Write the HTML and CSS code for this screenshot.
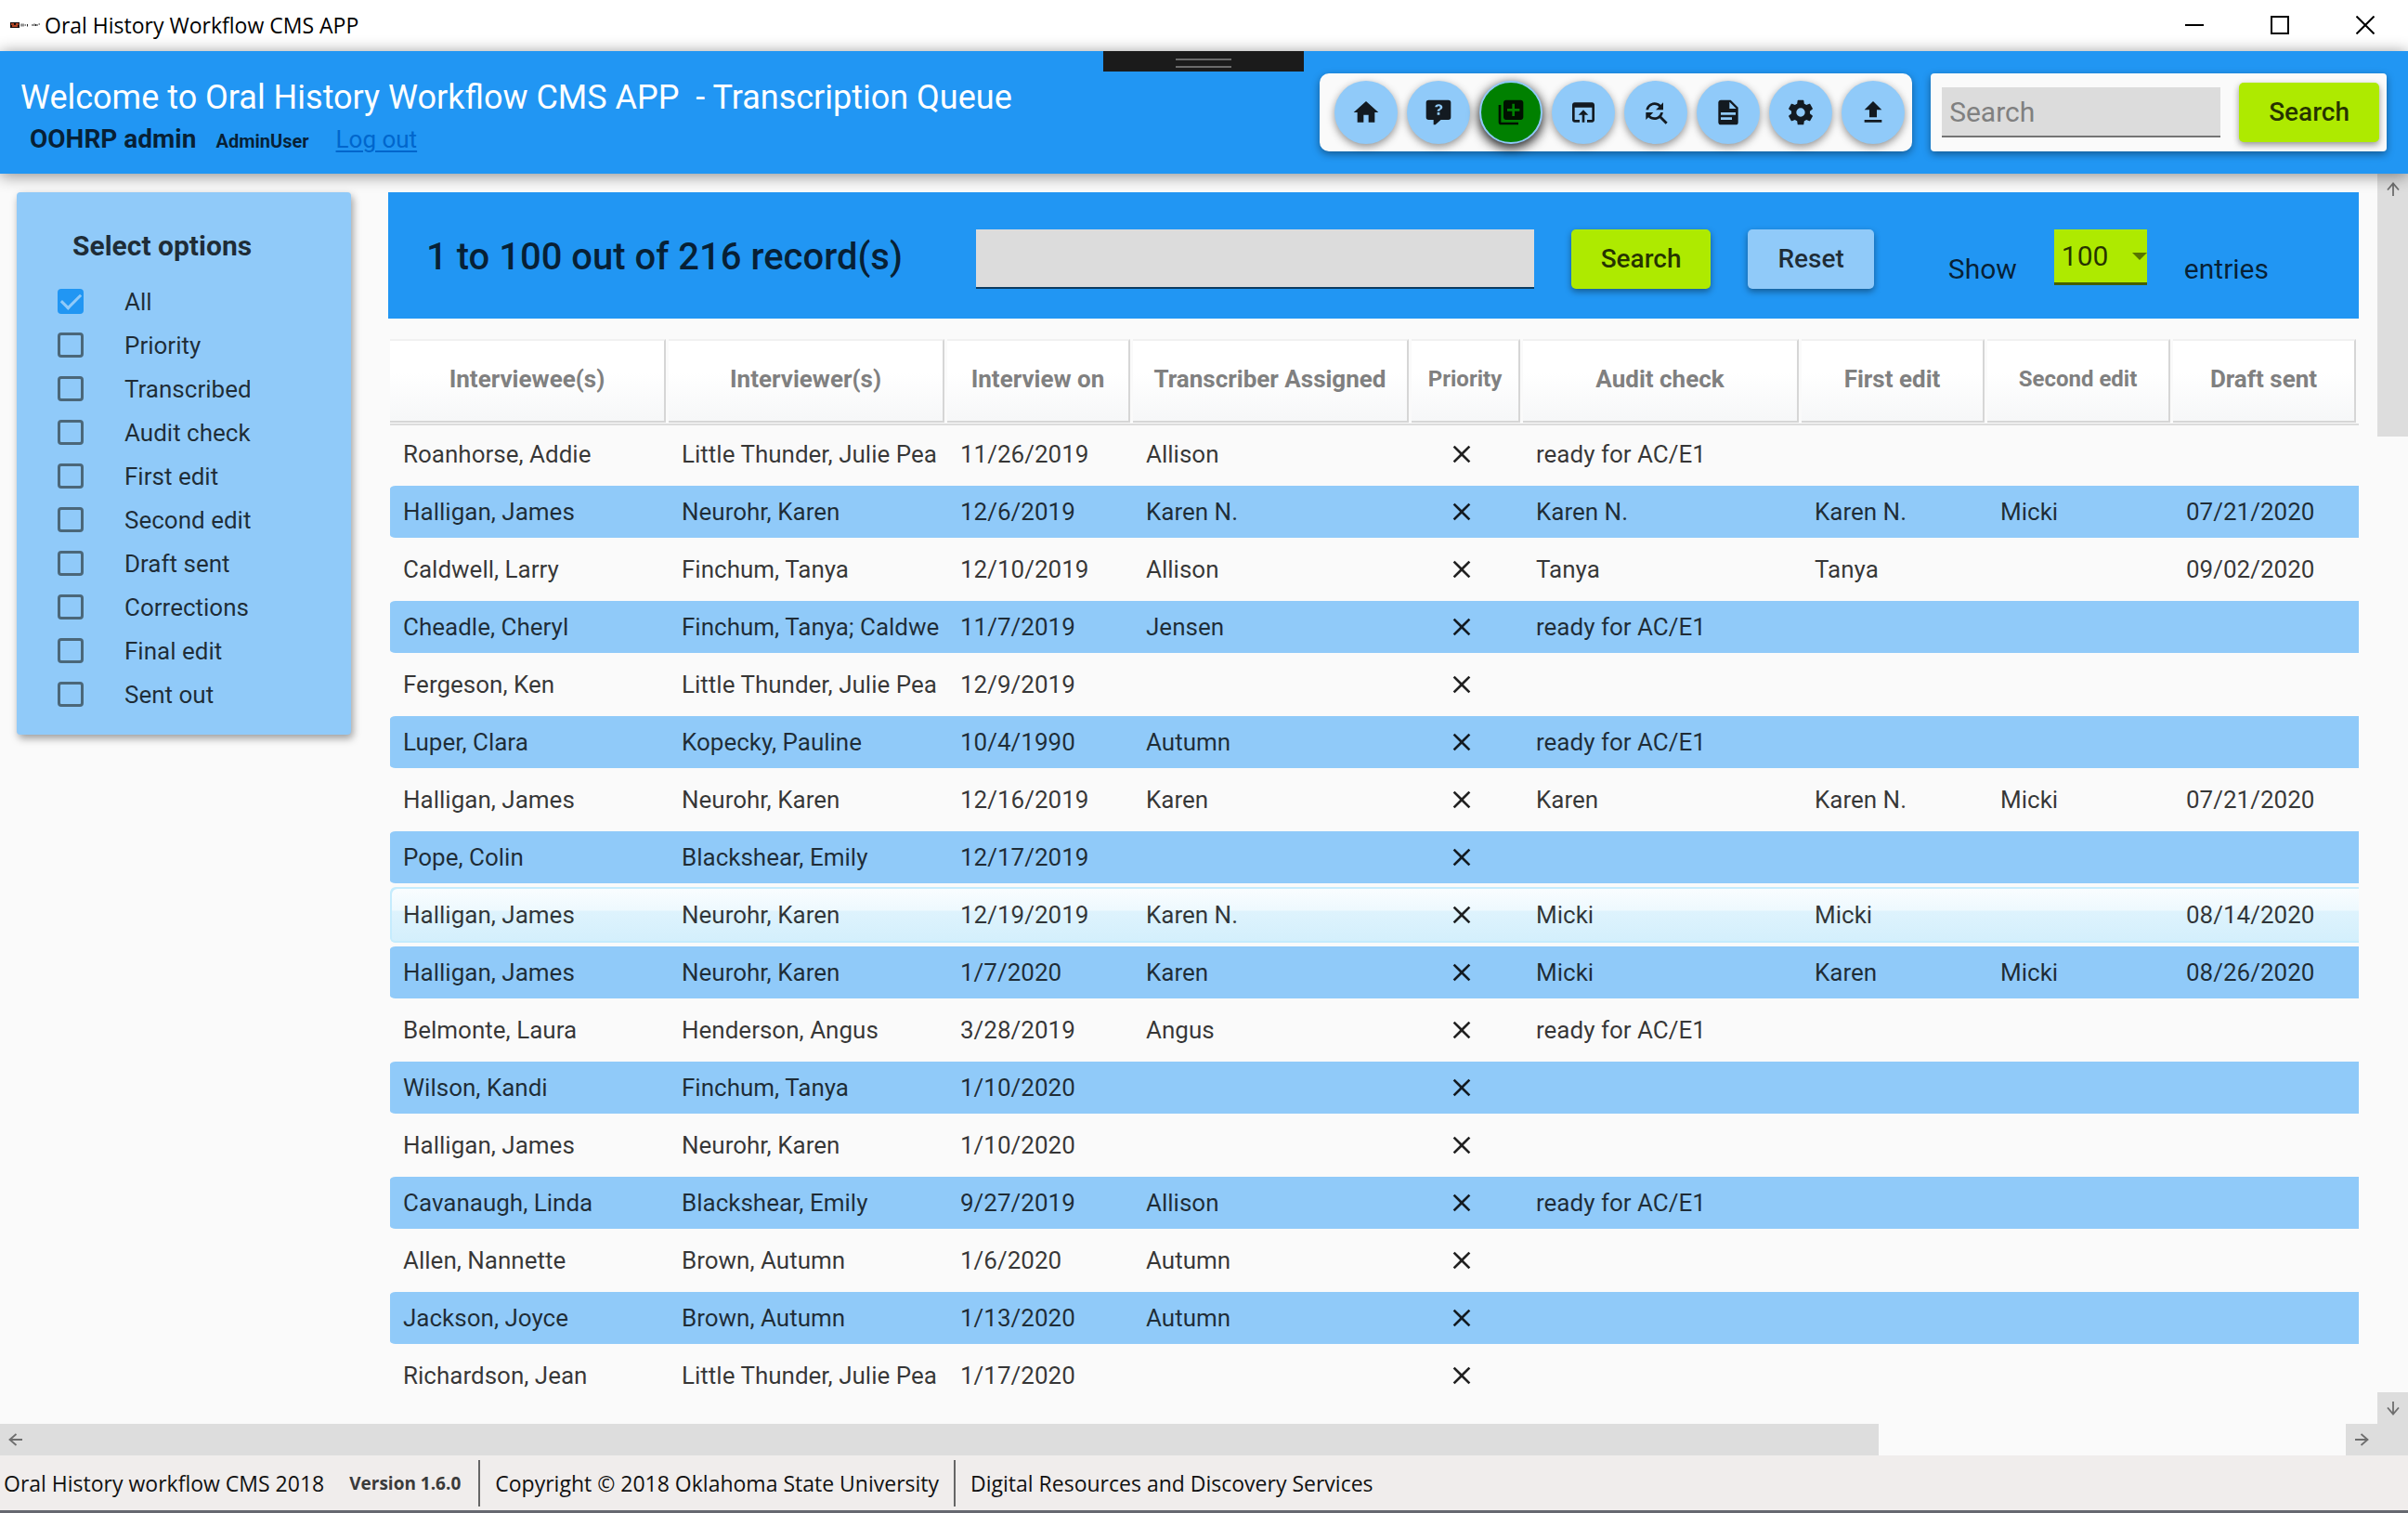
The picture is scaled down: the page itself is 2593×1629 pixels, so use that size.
FILE: index.html
```html
<!DOCTYPE html>
<html lang="en">
<head>
<meta charset="utf-8">
<title>Oral History Workflow CMS APP</title>
<link rel="stylesheet" href="styles.css">
</head>
<body>
<svg class="sprite" aria-hidden="true">
  <symbol id="close" viewBox="0 0 24 24"><path d="M19,6.41L17.59,5L12,10.59L6.41,5L5,6.41L10.59,12L5,17.59L6.41,19L12,13.41L17.59,19L19,17.59L13.41,12L19,6.41Z"/></symbol>
  <symbol id="arrow" viewBox="0 0 16 16"><path d="M8 1.500V15M2 8.500L8 1.500L14 8.500" fill="none" stroke="#6e6e6e" stroke-width="1.800"/></symbol>
</svg>

<div class="titlebar">
  <svg class="app-logo" viewBox="0 0 32 8" aria-hidden="true">
    <path d="M0 1H10V7H0Z" fill="#1c1010"/>
    <path d="M1 3H4M2 5H5M6 3H9M5 5H8" stroke="#e2572b" stroke-width="1.400"/>
    <path d="M12 2.500V5.500M14 2.500V5.500M15.500 4H17M18.500 3V5.500M24 3V5M26 2.500V5M27.500 3V5M29 3V5M30.500 3H32" stroke="#222" stroke-width="1"/>
  </svg>
  <span class="app-name">Oral History Workflow CMS APP</span>
  <div class="window-controls">
    <button type="button" aria-label="Minimize"><svg viewBox="0 0 20 20"><path d="M0 10H20"/></svg></button>
    <button type="button" aria-label="Maximize"><svg viewBox="0 0 20 20"><path d="M1 1H19V19H1Z"/></svg></button>
    <button type="button" aria-label="Close"><svg viewBox="0 0 20 20"><path d="M0.500 0.500L19.500 19.500M19.500 0.500L0.500 19.500"/></svg></button>
  </div>
</div>

<header class="header">
  <div class="drag-tab"></div>
  <div class="welcome">
    <h1>Welcome to Oral History Workflow CMS APP&nbsp; - Transcription Queue</h1>
    <div class="account">
      <strong class="account-name">OOHRP admin</strong>
      <strong class="account-role">AdminUser</strong>
      <a href="#">Log out</a>
    </div>
  </div>
  <nav class="toolbar" aria-label="Main">
    <button type="button" aria-label="Home"><svg viewBox="0 0 24 24"><path d="M10,20V14H14V20H19V12H22L12,3L2,12H5V20H10Z"/></svg></button>
    <button type="button" aria-label="Help"><svg viewBox="0 0 24 24"><path fill-rule="evenodd" d="M4,2A2,2 0 0,0 2,4V16A2,2 0 0,0 4,18H8V22H9.500L13.900,18H20A2,2 0 0,0 22,16V4A2,2 0 0,0 20,2H4M12.190,5.500C11.300,5.500 10.590,5.680 10.050,6.040C9.500,6.400 9.220,7 9.270,7.690H11.240C11.240,7.410 11.340,7.200 11.500,7.060C11.700,6.920 11.920,6.850 12.190,6.850C12.500,6.850 12.770,6.930 12.950,7.110C13.130,7.280 13.220,7.500 13.220,7.800C13.220,8.080 13.140,8.330 13,8.540C12.830,8.760 12.620,8.940 12.360,9.080C11.840,9.400 11.500,9.680 11.290,9.920C11.100,10.160 11,10.500 11,11H13C13,10.720 13.050,10.500 13.140,10.320C13.230,10.150 13.400,10 13.660,9.850C14.120,9.640 14.500,9.360 14.790,9C15.080,8.630 15.230,8.240 15.230,7.800C15.230,7.100 14.960,6.540 14.420,6.120C13.880,5.710 13.130,5.500 12.190,5.500M11,12V14H13V12H11Z"/></svg></button>
    <button type="button" class="active" aria-label="Transcription queue"><svg viewBox="0 0 24 24"><path d="M4 6H2v14c0 1.100.9 2 2 2h14v-2H4V6zm16-4H8c-1.100 0-2 .9-2 2v12c0 1.100.9 2 2 2h12c1.100 0 2-.9 2-2V4c0-1.100-.9-2-2-2zm-1 9h-4v4h-2v-4H9V9h4V5h2v4h4v2z"/></svg></button>
    <button type="button" aria-label="Open"><svg viewBox="0 0 24 24"><path d="M19 4H5c-1.110 0-2 .9-2 2v12c0 1.100.89 2 2 2h4v-2H5V8h14v10h-4v2h4c1.100 0 2-.9 2-2V6c0-1.100-.89-2-2-2zm-7 6l-4 4h3v6h2v-6h3l-4-4z"/></svg></button>
    <button type="button" aria-label="Find and replace"><svg viewBox="0 0 24 24"><path d="M11 6c1.380 0 2.630.56 3.540 1.460L12 10h6V4l-2.050 2.050C14.680 4.780 12.930 4 11 4c-3.530 0-6.430 2.610-6.920 6H6.100c.46-2.280 2.480-4 4.900-4zm5.640 9.140c.66-.9 1.120-1.970 1.280-3.140H15.900c-.46 2.280-2.480 4-4.900 4-1.380 0-2.630-.56-3.540-1.460L10 12H4v6l2.050-2.050C7.320 17.220 9.070 18 11 18c1.550 0 2.980-.51 4.140-1.360L20 21.490 21.490 20l-4.850-4.860z"/></svg></button>
    <button type="button" aria-label="Documents"><svg viewBox="0 0 24 24"><path d="M13,9H18.500L13,3.500V9M6,2H14L20,8V20A2,2 0 0,1 18,22H6C4.890,22 4,21.100 4,20V4C4,2.890 4.890,2 6,2M15,18V16H6V18H15M18,14V12H6V14H18Z"/></svg></button>
    <button type="button" aria-label="Settings"><svg viewBox="0 0 24 24"><path d="M12,15.500A3.500,3.500 0 0,1 8.500,12A3.500,3.500 0 0,1 12,8.500A3.500,3.500 0 0,1 15.500,12A3.500,3.500 0 0,1 12,15.500M19.430,12.970C19.470,12.650 19.500,12.330 19.500,12C19.500,11.670 19.470,11.340 19.430,11L21.540,9.370C21.730,9.220 21.780,8.950 21.660,8.730L19.660,5.270C19.540,5.050 19.270,4.960 19.050,5.050L16.560,6.050C16.040,5.660 15.500,5.320 14.870,5.070L14.500,2.420C14.460,2.180 14.250,2 14,2H10C9.750,2 9.540,2.180 9.500,2.420L9.130,5.070C8.500,5.320 7.960,5.660 7.440,6.050L4.950,5.050C4.730,4.960 4.460,5.050 4.340,5.270L2.340,8.730C2.210,8.950 2.270,9.220 2.460,9.370L4.570,11C4.530,11.340 4.500,11.670 4.500,12C4.500,12.330 4.530,12.650 4.570,12.970L2.460,14.630C2.270,14.780 2.210,15.050 2.340,15.270L4.340,18.730C4.460,18.950 4.730,19.030 4.950,18.950L7.440,17.940C7.960,18.340 8.500,18.680 9.130,18.930L9.500,21.580C9.540,21.820 9.750,22 10,22H14C14.250,22 14.460,21.820 14.500,21.580L14.870,18.930C15.500,18.670 16.040,18.340 16.560,17.940L19.050,18.950C19.270,19.030 19.540,18.950 19.660,18.730L21.660,15.270C21.780,15.050 21.730,14.780 21.540,14.630L19.430,12.970Z"/></svg></button>
    <button type="button" aria-label="Upload"><svg viewBox="0 0 24 24"><path d="M9,16V10H5L12,3L19,10H15V16H9M5,20V18H19V20H5Z"/></svg></button>
  </nav>
  <form class="quick-search">
    <input type="text" placeholder="Search" aria-label="Search">
    <button type="button" class="btn btn-lime">Search</button>
  </form>
</header>

<div class="workspace">
  <div class="content">
    <aside class="filters">
      <h2>Select options</h2>
      <ul>
        <li><label><input type="checkbox" checked>All</label></li>
        <li><label><input type="checkbox">Priority</label></li>
        <li><label><input type="checkbox">Transcribed</label></li>
        <li><label><input type="checkbox">Audit check</label></li>
        <li><label><input type="checkbox">First edit</label></li>
        <li><label><input type="checkbox">Second edit</label></li>
        <li><label><input type="checkbox">Draft sent</label></li>
        <li><label><input type="checkbox">Corrections</label></li>
        <li><label><input type="checkbox">Final edit</label></li>
        <li><label><input type="checkbox">Sent out</label></li>
      </ul>
    </aside>

    <main>
      <form class="banner">
        <p class="count">1 to 100 out of 216 record(s)</p>
        <input type="text" aria-label="Search records">
        <button type="button" class="btn btn-lime">Search</button>
        <button type="button" class="btn btn-blue">Reset</button>
        <label class="banner-text show" for="page-size">Show</label>
        <span class="page-size"><select id="page-size"><option>100</option></select></span>
        <span class="banner-text">entries</span>
      </form>

      <table>
        <colgroup>
          <col class="wide"><col class="wide"><col class="mid"><col class="wide"><col class="narrow"><col class="wide"><col class="mid"><col class="mid"><col class="mid">
        </colgroup>
        <thead>
          <tr>
            <th><div>Interviewee(s)</div></th>
            <th><div>Interviewer(s)</div></th>
            <th><div>Interview on</div></th>
            <th><div>Transcriber Assigned</div></th>
            <th><div class="small">Priority</div></th>
            <th><div>Audit check</div></th>
            <th><div>First edit</div></th>
            <th><div class="small">Second edit</div></th>
            <th><div>Draft sent</div></th>
          </tr>
        </thead>
        <tbody>
          <tr><td>Roanhorse, Addie</td><td>Little Thunder, Julie Pea</td><td>11/26/2019</td><td>Allison</td><td class="flag"><svg><use href="#close"/></svg></td><td>ready for AC/E1</td><td></td><td></td><td></td></tr>
          <tr><td>Halligan, James</td><td>Neurohr, Karen</td><td>12/6/2019</td><td>Karen N.</td><td class="flag"><svg><use href="#close"/></svg></td><td>Karen N.</td><td>Karen N.</td><td>Micki</td><td>07/21/2020</td></tr>
          <tr><td>Caldwell, Larry</td><td>Finchum, Tanya</td><td>12/10/2019</td><td>Allison</td><td class="flag"><svg><use href="#close"/></svg></td><td>Tanya</td><td>Tanya</td><td></td><td>09/02/2020</td></tr>
          <tr><td>Cheadle, Cheryl</td><td>Finchum, Tanya; Caldwe</td><td>11/7/2019</td><td>Jensen</td><td class="flag"><svg><use href="#close"/></svg></td><td>ready for AC/E1</td><td></td><td></td><td></td></tr>
          <tr><td>Fergeson, Ken</td><td>Little Thunder, Julie Pea</td><td>12/9/2019</td><td></td><td class="flag"><svg><use href="#close"/></svg></td><td></td><td></td><td></td><td></td></tr>
          <tr><td>Luper, Clara</td><td>Kopecky, Pauline</td><td>10/4/1990</td><td>Autumn</td><td class="flag"><svg><use href="#close"/></svg></td><td>ready for AC/E1</td><td></td><td></td><td></td></tr>
          <tr><td>Halligan, James</td><td>Neurohr, Karen</td><td>12/16/2019</td><td>Karen</td><td class="flag"><svg><use href="#close"/></svg></td><td>Karen</td><td>Karen N.</td><td>Micki</td><td>07/21/2020</td></tr>
          <tr><td>Pope, Colin</td><td>Blackshear, Emily</td><td>12/17/2019</td><td></td><td class="flag"><svg><use href="#close"/></svg></td><td></td><td></td><td></td><td></td></tr>
          <tr class="hovered"><td>Halligan, James</td><td>Neurohr, Karen</td><td>12/19/2019</td><td>Karen N.</td><td class="flag"><svg><use href="#close"/></svg></td><td>Micki</td><td>Micki</td><td></td><td>08/14/2020</td></tr>
          <tr><td>Halligan, James</td><td>Neurohr, Karen</td><td>1/7/2020</td><td>Karen</td><td class="flag"><svg><use href="#close"/></svg></td><td>Micki</td><td>Karen</td><td>Micki</td><td>08/26/2020</td></tr>
          <tr><td>Belmonte, Laura</td><td>Henderson, Angus</td><td>3/28/2019</td><td>Angus</td><td class="flag"><svg><use href="#close"/></svg></td><td>ready for AC/E1</td><td></td><td></td><td></td></tr>
          <tr><td>Wilson, Kandi</td><td>Finchum, Tanya</td><td>1/10/2020</td><td></td><td class="flag"><svg><use href="#close"/></svg></td><td></td><td></td><td></td><td></td></tr>
          <tr><td>Halligan, James</td><td>Neurohr, Karen</td><td>1/10/2020</td><td></td><td class="flag"><svg><use href="#close"/></svg></td><td></td><td></td><td></td><td></td></tr>
          <tr><td>Cavanaugh, Linda</td><td>Blackshear, Emily</td><td>9/27/2019</td><td>Allison</td><td class="flag"><svg><use href="#close"/></svg></td><td>ready for AC/E1</td><td></td><td></td><td></td></tr>
          <tr><td>Allen, Nannette</td><td>Brown, Autumn</td><td>1/6/2020</td><td>Autumn</td><td class="flag"><svg><use href="#close"/></svg></td><td></td><td></td><td></td><td></td></tr>
          <tr><td>Jackson, Joyce</td><td>Brown, Autumn</td><td>1/13/2020</td><td>Autumn</td><td class="flag"><svg><use href="#close"/></svg></td><td></td><td></td><td></td><td></td></tr>
          <tr><td>Richardson, Jean</td><td>Little Thunder, Julie Pea</td><td>1/17/2020</td><td></td><td class="flag"><svg><use href="#close"/></svg></td><td></td><td></td><td></td><td></td></tr>
        </tbody>
      </table>
    </main>
  </div>

  <div class="scroll-v">
    <div class="thumb"><button type="button" class="up" aria-label="Scroll up"><svg><use href="#arrow"/></svg></button></div>
    <button type="button" class="down" aria-label="Scroll down"><svg><use href="#arrow"/></svg></button>
  </div>
</div>

<div class="scroll-h">
  <div class="thumb"><button type="button" class="left" aria-label="Scroll left"><svg><use href="#arrow"/></svg></button></div>
  <div class="end"><button type="button" class="right" aria-label="Scroll right"><svg><use href="#arrow"/></svg></button></div>
</div>

<footer class="status">
  <span>Oral History workflow CMS 2018</span>
  <strong>Version 1.6.0</strong>
  <span class="part">Copyright © 2018 Oklahoma State University</span>
  <span class="part">Digital Resources and Discovery Services</span>
</footer>
</body>
</html>
```
FILE: styles.css
```css
:root {
  --blue: #2196f3;
  --light-blue: #90caf9;
  --lime: #aeea00;
  --paper: #fafafa;
  --ink: rgba(0, 0, 0, 0.87);
  --ink-soft: rgba(0, 0, 0, 0.78);
  --scroll: #dddddd;
}

* { box-sizing: border-box; }

body {
  margin: 0;
  min-height: 100vh;
  display: flex;
  flex-direction: column;
  background: var(--paper);
  color: var(--ink-soft);
  font: 26px/32px Roboto, sans-serif;
}

h1, h2, p, ul { margin: 0; padding: 0; }
button, input, select { font: inherit; color: inherit; border: 0; padding: 0; border-radius: 0; }
button { cursor: pointer; }
svg { display: block; }
.sprite { position: absolute; width: 0; height: 0; }

/* Window title bar */
.titlebar {
  display: flex;
  align-items: center;
  height: 55px;
  padding: 0 0 2px 11px;
  background: #fff;
  color: #000;
  font: 23px/32px "Open Sans", sans-serif;
}
.app-logo { width: 32px; height: 8px; margin-right: 5px; }
.window-controls { display: flex; margin-left: auto; }
.window-controls button {
  width: 92px;
  height: 52px;
  display: grid;
  place-items: center;
  background: none;
}
.window-controls svg { width: 20px; height: 20px; fill: none; stroke: #000; stroke-width: 2; }

/* Header */
.header {
  position: relative;
  z-index: 1;
  display: flex;
  align-items: flex-start;
  gap: 20px;
  height: 132px;
  padding: 24px 23px 0 22px;
  background: var(--blue);
  box-shadow: 0 2px 16px rgba(0, 0, 0, 0.45);
}
.drag-tab {
  position: absolute;
  top: 0;
  left: 50%;
  width: 216px;
  height: 22px;
  margin-left: -109px;
  padding: 8px 78px;
  background: #1b1b1b;
}
.drag-tab::before {
  content: "";
  display: block;
  height: 6px;
  border: solid #6b6b6b;
  border-width: 2px 0;
}
.welcome { margin-right: auto; padding-top: 4px; }
.welcome h1 { font-size: 36px; font-weight: 400; line-height: 44px; color: #fff; white-space: nowrap; }
.account { display: flex; align-items: baseline; padding: 5px 0 0 10px; line-height: 36px; color: var(--ink-soft); }
.account-name { font-size: 28px; margin-right: 21px; }
.account-role { font-size: 20px; margin-right: 29px; }
.account a { color: #0066cc; text-underline-offset: 3px; text-decoration-thickness: 2px; }

.toolbar, .quick-search {
  display: flex;
  align-items: center;
  height: 84px;
  background: var(--paper);
  box-shadow: 0 3px 8px rgba(0, 0, 0, 0.4);
}
.toolbar { gap: 10px; padding: 0 8px 0 16px; border-radius: 10px; }
.toolbar button {
  width: 68px;
  height: 68px;
  display: grid;
  place-items: center;
  border-radius: 50%;
  background: var(--light-blue);
  box-shadow: 0 3px 9px rgba(0, 0, 0, 0.42);
}
.toolbar svg { width: 32px; height: 32px; fill: var(--ink); }
.toolbar .active {
  background: #008000;
  border: 2px solid var(--light-blue);
  box-shadow: 0 4px 12px 1px rgba(0, 0, 0, 0.85);
}
.quick-search { padding: 0 8px 0 12px; border-radius: 4px; }
.quick-search input {
  width: 300px;
  height: 54px;
  margin-right: 20px;
  padding: 0 8px;
  background: #dcdcdc;
  border-bottom: 2px solid #757575;
  font-size: 30px;
}
.quick-search input::placeholder { color: #808080; }

.btn {
  height: 64px;
  padding: 0 32px;
  border-radius: 5px;
  font-size: 28px;
  font-weight: 500;
  color: var(--ink-soft);
  box-shadow: 0 3px 7px rgba(0, 0, 0, 0.4);
}
.btn-lime { background: var(--lime); }
.btn-blue { background: var(--light-blue); }

/* Workspace */
.workspace { flex: 1; display: flex; }
.content {
  flex: 1;
  min-width: 0;
  display: grid;
  grid-template-columns: 360px minmax(0, 1fr);
  gap: 40px;
  align-items: start;
  padding: 20px 20px 0 18px;
}

.filters {
  padding: 36px 44px 20px;
  background: var(--light-blue);
  border-radius: 4px;
  box-shadow: 2px 4px 8px rgba(0, 0, 0, 0.38);
}
.filters h2 { padding-left: 16px; font-size: 30px; line-height: 44px; }
.filters ul { list-style: none; padding-top: 14px; }
.filters label { display: flex; align-items: center; gap: 44px; height: 47px; }
.filters input {
  appearance: none;
  width: 28px;
  height: 27px;
  margin: 0;
  border: 3px solid #4b6779;
  border-radius: 4px;
}
.filters input:checked { border: 0; background: var(--blue); display: grid; place-items: center; }
.filters input:checked::before {
  content: "";
  width: 18px;
  height: 9px;
  margin-bottom: 6px;
  border: solid var(--light-blue);
  border-width: 0 0 3px 3px;
  transform: rotate(-45deg);
}

.banner {
  display: flex;
  align-items: flex-start;
  gap: 40px;
  padding: 40px 97px 32px 41px;
  height: 136px;
  margin-bottom: 22px;
  background: var(--blue);
  color: var(--ink-soft);
}
.count { font-size: 40px; font-weight: 500; line-height: 60px; white-space: nowrap; }
.banner input {
  flex: 1;
  min-width: 0;
  height: 64px;
  margin-left: 39px;
  padding: 0 8px;
  background: #dcdcdc;
  border-bottom: 2px solid #0d3c61;
}
.banner-text { font-size: 30px; line-height: 42px; padding-top: 22px; }
.show { margin-left: 40px; }
.page-size { position: relative; width: 100px; }
.page-size select {
  appearance: none;
  display: block;
  width: 100%;
  height: 60px;
  padding-left: 8px;
  background: var(--lime);
  border-bottom: 3px solid #465e00;
  font-size: 30px;
}
.page-size::after {
  content: "";
  position: absolute;
  top: 25px;
  right: 0;
  border: solid transparent;
  border-width: 8px 8px 0;
  border-top-color: #577500;
}

/* Records table */
table { width: calc(100% - 2px); margin-left: 2px; table-layout: fixed; border-spacing: 0; }
.wide { width: 300px; }
.mid { width: 200px; }
.narrow { width: 120px; }
th { padding: 0 0 1px; border-bottom: 2px solid #dcdcdc; color: #808080; }
th div {
  height: 90px;
  margin-right: 3px;
  padding-bottom: 4px;
  display: grid;
  place-items: center;
  background: linear-gradient(#fff 40%, #f6f7f8);
  border: solid #d6d6d6;
  border-width: 2px 2px 2px 0;
  border-top-color: #f1f1f1;
}
th .small { font-size: 24px; }
td {
  height: 62px;
  padding: 0 0 0 14px;
  border: solid transparent;
  border-width: 3px 0;
  background-clip: padding-box;
  overflow: hidden;
  white-space: nowrap;
}
tbody tr:nth-child(even) td { background-color: var(--light-blue); }
td:first-child { border-radius: 6px 0 0 6px; }
.flag { padding-left: 38px; }
.flag svg { width: 32px; height: 32px; fill: var(--ink); }
.hovered td {
  border-width: 1px 0;
  background-image: linear-gradient(#fafdff, #eef9fe 42%, #def3fd 43%, #d3effc);
  box-shadow: inset 0 2px #c5ecfd, inset 0 -2px #c5ecfd;
}
.hovered td:first-child { box-shadow: inset 2px 2px #c5ecfd, inset 0 -2px #c5ecfd; }

/* Scroll bars */
.scroll-v { width: 33px; display: flex; flex-direction: column; justify-content: space-between; }
.scroll-v .thumb { height: 21%; background: var(--scroll); }
.scroll-h { display: flex; justify-content: space-between; height: 34px; }
.scroll-h .thumb { width: 78%; background: var(--scroll); }
.scroll-h .end { width: 67px; background: var(--scroll); }
.scroll-v button, .scroll-h button {
  width: 33px;
  height: 34px;
  display: grid;
  place-items: center;
  background: var(--scroll);
}
.scroll-v svg, .scroll-h svg { width: 16px; height: 16px; }
.down svg { transform: rotate(180deg); }
.left svg { transform: rotate(-90deg); }
.right svg { transform: rotate(90deg); }

/* Status bar */
.status {
  display: flex;
  align-items: center;
  height: 62px;
  padding: 0 4px;
  background: #f0edec;
  border-bottom: 3px solid #666870;
  color: #111;
  font: 23px/50px "Open Sans", sans-serif;
}
.status strong { margin: 0 19px 0 27px; font-size: 19px; color: #3a3a3a; }
.status .part { padding: 0 16px; border-left: 2px solid #666; }
```
